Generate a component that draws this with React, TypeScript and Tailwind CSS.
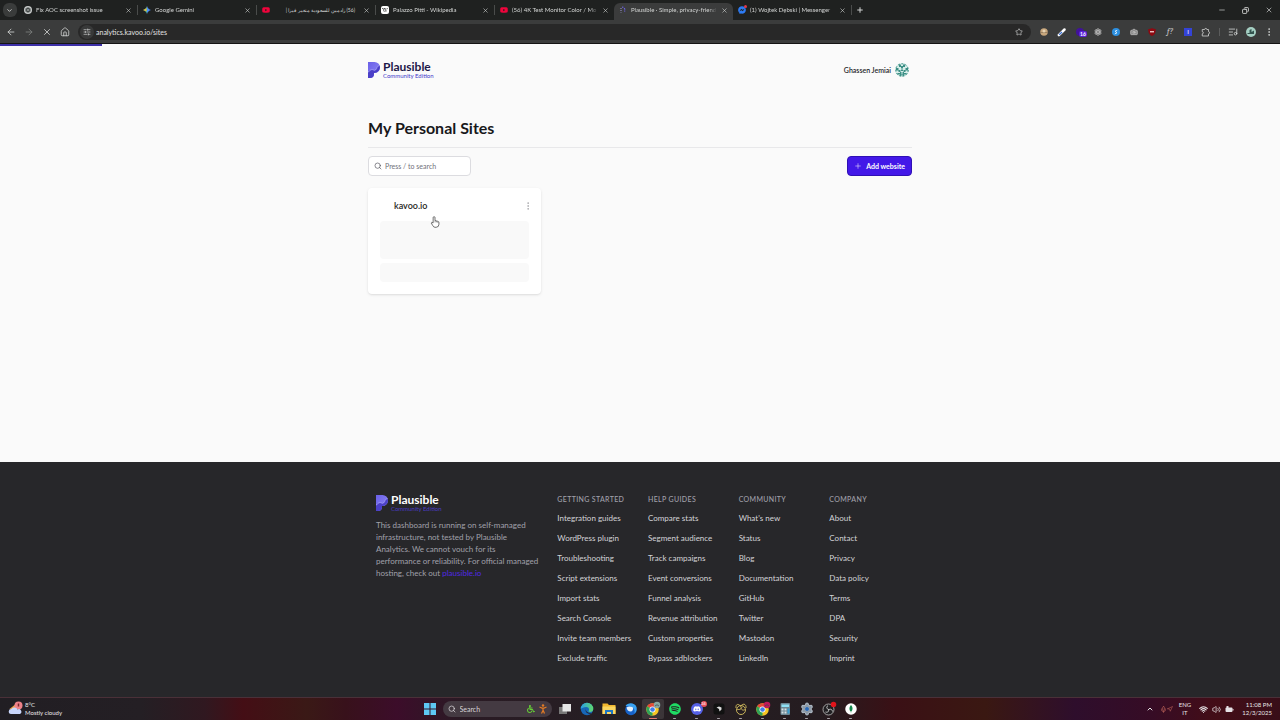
import type { ReactNode } from 'react'
import {
	ArrowLeft,
	ArrowRight,
	Camera,
	ChevronDown,
	ChevronUp,
	Copy,
	EllipsisVertical,
	House,
	ListMusic,
	Mic,
	Minus,
	Navigation,
	Plus,
	Search,
	Settings,
	SlidersHorizontal,
	Star,
	Volume2,
	Wifi,
	X,
} from 'lucide-react'
import {
	FaDiscord,
	FaFacebookMessenger,
	FaSpotify,
	FaWheelchair,
	FaWikipediaW,
	FaYoutube,
} from 'react-icons/fa'

interface Tab {
	title: string
	icon: ReactNode
	active?: boolean
	rtl?: boolean
}

function GptIcon() {
	return (
		<svg viewBox="0 0 16 16" className="size-2">
			<circle cx="8" cy="8" r="8" fill="#c9cccb" />
			<g fill="none" stroke="#2f3533" strokeWidth="1.2">
				<ellipse cx="8" cy="8" rx="2.4" ry="5.2" />
				<ellipse cx="8" cy="8" rx="2.4" ry="5.2" transform="rotate(60 8 8)" />
				<ellipse cx="8" cy="8" rx="2.4" ry="5.2" transform="rotate(120 8 8)" />
			</g>
		</svg>
	)
}

function GeminiIcon() {
	return (
		<svg viewBox="0 0 16 16" className="size-2">
			<path d="M8 0c0 5-1 7-3 8h6C9 7 8 5 8 0z" fill="#e8574a" />
			<path d="M8 0C7 4 4 7 0 8c4 1 7 4 8 8z" fill="#43b7a0" />
			<path d="M8 0c1 4 4 7 8 8-4 1-7 4-8 8z" fill="#4a8df6" />
			<path d="M0 8c4-1 6-3 7-5v8C5 10 3 9 0 8z" fill="#f2b93b" />
		</svg>
	)
}

function ChromeIcon({ badge }: { badge: string }) {
	return (
		<svg viewBox="0 0 32 32" className="size-4">
			<circle cx="15" cy="17" r="12.500" fill="#f6c624" />
			<path d="M15 17 4.200 10.700A12.500 12.500 0 0 1 25.800 10.700z" fill="#e5483b" />
			<path d="M15 17 4.200 10.700A12.500 12.500 0 0 0 15 29.500z" fill="#2fa457" />
			<circle cx="15" cy="17" r="6" fill="#fff" />
			<circle cx="15" cy="17" r="4.600" fill="#3f7de8" />
			<circle cx="24" cy="8" r="6.500" fill={badge} />
			<path d="M20 10q4-5 8 0" stroke="#3b4b50" strokeWidth="1.500" fill="none" />
		</svg>
	)
}

const youtube = <FaYoutube className="size-2 text-[#f0043c]" />

const tabs: Tab[] = [
	{ title: 'Fix AOC screenshot issue', icon: <GptIcon /> },
	{ title: 'Google Gemini', icon: <GeminiIcon /> },
	{ title: '(56) زادمين للسعودية متغير فيزا |', icon: youtube, rtl: true },
	{
		title: 'Palazzo Pitti - Wikipedia',
		icon: (
			<span className="flex size-2 items-center justify-center rounded-xs bg-white">
				<FaWikipediaW className="size-1.5 text-black" />
			</span>
		),
	},
	{ title: '(56) 4K Test Monitor Color / Mo', icon: youtube },
	{
		title: 'Plausible · Simple, privacy-friend',
		active: true,
		icon: (
			<svg viewBox="0 0 16 16" className="size-2">
				<path
					d="M6 2a6 6 0 0 1 5 9"
					fill="none"
					stroke="#6f63e8"
					strokeWidth="2.500"
					strokeDasharray="3 2"
				/>
				<path d="M4 4v9" stroke="#8b87b5" strokeWidth="2.500" strokeDasharray="2 2" />
			</svg>
		),
	},
	{
		title: '(1) Wojtek Dębski | Messenger',
		icon: (
			<span className="relative">
				<FaFacebookMessenger className="size-2 text-[#2d7bf4]" />
				<span className="absolute -top-px -right-px size-[3px] rounded-full bg-[#e2384a]" />
			</span>
		),
	},
]

const extensions: { label: string; icon: ReactNode }[] = [
	{
		label: 'Cookies',
		icon: (
			<svg viewBox="0 0 16 16" className="size-2">
				<circle cx="8" cy="8" r="7.500" fill="#c7a67c" />
				<path d="M1 9h14" stroke="#6c5a47" strokeWidth="1" />
				<circle cx="8" cy="6" r="3" fill="#e5d3b5" />
			</svg>
		),
	},
	{
		label: 'Color picker',
		icon: (
			<svg viewBox="0 0 16 16" className="size-2.5">
				<path d="M3 13 12 4" stroke="#fff" strokeWidth="4" strokeLinecap="round" />
				<path d="M3.500 12.500 8 8" stroke="#3b6fd1" strokeWidth="2" />
			</svg>
		),
	},
	{
		label: 'Trackers',
		icon: (
			<span className="relative flex size-2 rounded-full bg-[#41129a]">
				<span className="absolute top-[3px] left-[3px] rounded-xs bg-[#5b21d8] px-px text-[5px] leading-[6px] font-bold text-white">
					16
				</span>
			</span>
		),
	},
	{
		label: 'React tools',
		icon: (
			<svg viewBox="0 0 16 16" className="size-2">
				<g fill="none" stroke="#c4c4c4" strokeWidth="1.400">
					<ellipse cx="8" cy="8" rx="3" ry="7" />
					<ellipse cx="8" cy="8" rx="3" ry="7" transform="rotate(60 8 8)" />
					<ellipse cx="8" cy="8" rx="3" ry="7" transform="rotate(120 8 8)" />
				</g>
				<circle cx="8" cy="8" r="1.500" fill="#eee" />
			</svg>
		),
	},
	{
		label: 'Lookup',
		icon: (
			<svg viewBox="0 0 16 16" className="size-2">
				<circle cx="8" cy="8" r="8" fill="#2c8fe0" />
				<path d="M10.500 4.500 6 6.500l4 3-4.500 2.500" fill="none" stroke="#d9eeff" strokeWidth="2" />
			</svg>
		),
	},
	{ label: 'Screenshot', icon: <Camera className="size-2 fill-[#8d8d8d] text-[#c8c8c8]" /> },
	{
		label: 'Ad blocker',
		icon: (
			<svg viewBox="0 0 16 16" className="size-2">
				<path d="M8 0c2 1.500 5 2 7.500 2 0 7-1 11-7.500 14C1.500 13 .5 9 .5 2 3 2 6 1.500 8 0z" fill="#8d0911" />
				<path d="M4 7.500h8" stroke="#f2dcdc" strokeWidth="2.500" />
			</svg>
		),
	},
	{
		label: 'Font finder',
		icon: <span className="font-serif text-[8px] leading-none text-[#d6d6d6] italic">f?</span>,
	},
	{
		label: 'Inspector',
		icon: (
			<span className="flex size-2 items-center justify-center bg-[#3443d6] text-[6px] leading-none text-white">
				I
			</span>
		),
	},
	{
		label: 'Extensions',
		icon: (
			<svg viewBox="0 0 20 20" className="size-2.5" fill="none" stroke="currentColor" strokeWidth="1.600">
				<path d="M2.500 5h4.800a2.200 2.200 0 0 1 4.400 0H15v4.300a2.200 2.200 0 0 1 0 4.400V18H2.500v-4.300a2.200 2.200 0 0 0 0-4.400z" />
			</svg>
		),
	},
]

const footerColumns = [
	{
		title: 'Getting started',
		links: [
			'Integration guides',
			'WordPress plugin',
			'Troubleshooting',
			'Script extensions',
			'Import stats',
			'Search Console',
			'Invite team members',
			'Exclude traffic',
		],
	},
	{
		title: 'Help guides',
		links: [
			'Compare stats',
			'Segment audience',
			'Track campaigns',
			'Event conversions',
			'Funnel analysis',
			'Revenue attribution',
			'Custom properties',
			'Bypass adblockers',
		],
	},
	{
		title: 'Community',
		links: [
			"What's new",
			'Status',
			'Blog',
			'Documentation',
			'GitHub',
			'Twitter',
			'Mastodon',
			'LinkedIn',
		],
	},
	{
		title: 'Company',
		links: [
			'About',
			'Contact',
			'Privacy',
			'Data policy',
			'Terms',
			'DPA',
			'Security',
			'Imprint',
		],
	},
]

const taskbarApps: { label: string; icon: ReactNode; running?: boolean; active?: boolean }[] = [
	{
		label: 'Task view',
		icon: (
			<svg viewBox="0 0 32 32" className="size-4">
				<path d="M4 12h16v14H4z" fill="#777" />
				<path d="M11 6h17v15H11z" fill="#e6e6e6" />
			</svg>
		),
	},
	{
		label: 'Edge',
		icon: (
			<svg viewBox="0 0 32 32" className="size-4">
				<defs>
					<linearGradient id="edge" x1="0" x2="1">
						<stop offset="0" stopColor="#2a9de6" />
						<stop offset="1" stopColor="#5fd86a" />
					</linearGradient>
				</defs>
				<circle cx="16" cy="16" r="12.500" fill="#1767b8" />
				<path d="M3.500 16a12.500 12.500 0 0 1 25 0c0 5-5 7-10 5 3-3 2-9-4-9-5 0-9 2-11 4z" fill="url(#edge)" />
				<path d="M14 15c-1 6 3 9 10 9 2 0-2 2.500-4 1.500-6-1-8-5-6-10.500z" fill="#252126" />
			</svg>
		),
	},
	{
		label: 'File Explorer',
		icon: (
			<svg viewBox="0 0 32 32" className="size-4">
				<path d="M3 5h10l3 3h13v18H3z" fill="#f3b72f" />
				<path d="M3 11h26v15H3z" fill="#fbd661" />
				<path d="M8 26v-8h16v8h-4v-4h-8v4z" fill="#1c76c4" />
			</svg>
		),
	},
	{
		label: 'Thunderbird',
		icon: (
			<svg viewBox="0 0 32 32" className="size-4">
				<circle cx="16" cy="17" r="11.500" fill="#1762c9" />
				<path d="M5 10c4-7 18-8 22 2 1 7-1 10-4 13 2-10-3-16-18-15z" fill="#39a2f2" />
				<path d="M7 13c3-3 9-3 13 0 1 4-1 8-5 8s-7-3-8-8z" fill="#e5f1fc" />
			</svg>
		),
	},
	{ label: 'Chrome', icon: <ChromeIcon badge="#87a7a1" />, running: true, active: true },
	{
		label: 'Spotify',
		icon: <FaSpotify className="size-3 text-[#1fdb64]" />,
		running: true,
	},
	{
		label: 'Discord',
		running: true,
		icon: (
			<span className="relative flex size-3 items-center justify-center rounded-full bg-[#5560e6]">
				<FaDiscord className="size-2 text-white" />
				<span className="absolute -top-0.5 -right-1 size-1.5 rounded-full bg-[#e9505e] text-center text-[4px] leading-[6px] text-white">
					24
				</span>
			</span>
		),
	},
	{
		label: 'Cursor',
		running: true,
		icon: (
			<svg viewBox="0 0 32 32" className="size-4">
				<rect x="5" y="5" width="22" height="22" rx="5" fill="#111" />
				<path d="M11 13l5-2 5 2v4l-4 4-1-5z" fill="#ddd" />
			</svg>
		),
	},
	{
		label: 'Navicat',
		running: true,
		icon: (
			<svg viewBox="0 0 32 32" className="size-4" fill="none" stroke="#c9b45b" strokeWidth="2">
				<circle cx="16" cy="18" r="9" />
				<path d="M6 14c-1-9 6-9 9-3 4-7 12-6 11 3M8 16c5 3 10-1 10-5M24 17c-4 3-8 0-8-4" />
			</svg>
		),
	},
	{ label: 'Chrome, second profile', icon: <ChromeIcon badge="#c2185b" />, running: true },
	{
		label: 'Calculator',
		running: true,
		icon: (
			<svg viewBox="0 0 32 32" className="size-4">
				<rect x="7" y="4" width="19" height="24" rx="2" fill="#6e8894" />
				<path d="M9 7h15v5H9z" fill="#8fe1f5" />
				<path d="M9 15h4v4H9zM15 15h4v4h-4zM9 21h4v4H9zM15 21h4v4h-4z" fill="#d5e1e5" />
				<path d="M21 15h4v10h-4z" fill="#369fd2" />
			</svg>
		),
	},
	{
		label: 'Settings',
		running: true,
		icon: (
			<span className="relative flex">
				<Settings className="size-3.5 fill-[#8a97a4] text-[#a9b4bf]" />
				<span className="absolute inset-[5px] rounded-full bg-[#2767b5]" />
			</span>
		),
	},
	{
		label: 'OBS Studio',
		running: true,
		icon: (
			<svg viewBox="0 0 32 32" className="size-4">
				<circle cx="15" cy="17" r="11" fill="#211f22" stroke="#c9c9c9" strokeWidth="1.500" />
				<g fill="none" stroke="#c9c9c9" strokeWidth="2">
					<path d="M14 9c-5 4-1 8 2 8" />
					<path d="M9 22c6 2 7-3 6-6" />
					<path d="M23 21c-1-6-6-5-8-3" />
				</g>
				<circle cx="25" cy="7" r="5.500" fill="#e3141b" />
			</svg>
		),
	},
	{
		label: 'MongoDB Compass',
		running: true,
		icon: (
			<svg viewBox="0 0 32 32" className="size-4">
				<circle cx="16" cy="16" r="11.500" fill="#fff" />
				<path d="M16 8c5 5 3 11 .5 13L16 25l-.5-4C13 19 11 13 16 8z" fill="#12884c" />
			</svg>
		),
	},
]

function BrowserTabs() {
	return (
		<div className="flex h-5 items-center bg-[#1f2120] text-[#d3d5d4]">
			<div className="flex w-[19px] shrink-0 justify-center">
				<button
					type="button"
					aria-label="Search tabs"
					className="flex size-3.5 items-center justify-center rounded-md bg-[#3a3c3b]"
				>
					<ChevronDown className="size-[7px]" strokeWidth={3} />
				</button>
			</div>
			{tabs.map((tab, index) => (
				<div
					key={tab.title}
					className={`flex w-[119px] shrink-0 items-center self-stretch ${
						tab.active ? 'mt-[3px] rounded-t-md bg-[#3b3c3c] pb-[3px]' : ''
					}`}
				>
					<div
						className={`flex w-full items-center gap-1 pr-[5px] pl-[5px] ${
							index < 4 || index === 6 ? 'border-r border-[#4a4c4b]' : ''
						}`}
					>
						<span className="flex size-2 shrink-0 items-center justify-center">
							{tab.icon}
						</span>
						<span
							dir={tab.rtl ? 'rtl' : 'ltr'}
							className={`flex-1 overflow-hidden leading-[10px] whitespace-nowrap ${
								tab.rtl ? 'pr-1 text-[5px]' : 'mask-r-from-90% text-[6px]'
							}`}
						>
							{tab.title}
						</span>
						<button type="button" aria-label={`Close ${tab.title}`}>
							<X className="size-[7px]" strokeWidth={2} />
						</button>
					</div>
				</div>
			))}
			<button type="button" aria-label="New tab" className="ml-1">
				<Plus className="size-2" strokeWidth={3} />
			</button>
			<div className="ml-auto flex items-center gap-4 pr-[7px]">
				<button type="button" aria-label="Minimize">
					<Minus className="size-2" />
				</button>
				<button type="button" aria-label="Restore">
					<Copy className="size-[7px] -scale-x-100" strokeWidth={3} />
				</button>
				<button type="button" aria-label="Close">
					<X className="size-2" />
				</button>
			</div>
		</div>
	)
}

function BrowserToolbar() {
	return (
		<div className="flex h-6 items-center border-b border-[#141414] bg-[#3b3c3c] pr-0.5 pl-[6px] text-[#d0d2d1]">
			<div className="flex items-center gap-2">
				<button type="button" aria-label="Back">
					<ArrowLeft className="size-2.5" />
				</button>
				<button type="button" aria-label="Forward" className="text-[#7d7f7e]">
					<ArrowRight className="size-2.5" />
				</button>
				<button type="button" aria-label="Stop">
					<X className="size-2.5" />
				</button>
				<button type="button" aria-label="Home">
					<House className="size-2.5" />
				</button>
			</div>
			<div className="ml-2 flex h-4 flex-1 items-center rounded-full bg-[#282828] pr-2 pl-0.5">
				<button
					type="button"
					aria-label="Site information"
					className="flex size-3.5 items-center justify-center rounded-full bg-[#383939]"
				>
					<SlidersHorizontal className="size-2" />
				</button>
				<input
					aria-label="Address"
					defaultValue="analytics.kavoo.io/sites"
					className="ml-0.5 h-3 flex-1 bg-transparent text-[7px] text-[#e3e3e3] outline-none"
				/>
				<button type="button" aria-label="Bookmark">
					<Star className="size-2" />
				</button>
			</div>
			<div className="ml-1 flex items-center">
				{extensions.map((item) => (
					<button
						key={item.label}
						type="button"
						aria-label={item.label}
						className="flex w-[18px] items-center justify-center"
					>
						{item.icon}
					</button>
				))}
				<span className="mx-1 h-2 w-px bg-[#5b5c5c]" />
				<button type="button" aria-label="Media" className="flex w-[18px] justify-center">
					<ListMusic className="size-2.5" />
				</button>
				<button type="button" aria-label="Profile" className="flex w-[18px] justify-center">
					<svg viewBox="0 0 20 20" className="size-2.5">
						<circle cx="10" cy="10" r="10" fill="#a5cfc3" />
						<path d="M2 12h5V6l4-2v6l5-3v7H4z" fill="#32534e" />
					</svg>
				</button>
				<button type="button" aria-label="Menu" className="flex w-[18px] justify-center">
					<EllipsisVertical className="size-2.5" />
				</button>
			</div>
		</div>
	)
}

function Logo({ dark }: { dark?: boolean }) {
	const id = dark ? 'logo-dark' : 'logo-light'

	return (
		<a href="#home" className="flex h-[17px] items-center gap-[3px]">
			<svg viewBox="0 0 24 32" className="h-4 w-3">
				<defs>
					<linearGradient id={id} x1="0" y1="0" x2="1" y2="1">
						<stop offset="0" stopColor="#6a60e8" />
						<stop offset="1" stopColor="#8f88f5" />
					</linearGradient>
				</defs>
				<path
					d="M0 0h13a11 11 0 0 1 0 22h-1v2q0 8-8 8H0z"
					fill={`url(#${id})`}
				/>
				<path
					d="M0 20c3 0 4-5 8-5 3 0 4 3 7 1 4-3 2-8 8-9a11 11 0 0 1-10 15h-1v2q0 8-8 8H0z"
					fill="#4b40c8"
				/>
				<path
					d="M0 20c3 0 4-5 8-5 3 0 4 3 7 1 4-3 2-8 8-9"
					fill="none"
					stroke="#b7b2ff"
					strokeWidth="1.200"
				/>
			</svg>
			<span className="flex flex-col">
				<span
					className={`text-[12px] leading-3 font-bold ${dark ? 'text-white' : 'text-[#1d1748]'}`}
				>
					Plausible
				</span>
				<span
					className={`text-[6px] leading-[6px] ${dark ? 'text-[#4a3cc0]' : 'text-[#4338ca]'}`}
				>
					Community Edition
				</span>
			</span>
		</a>
	)
}

function SiteCard() {
	return (
		<li className="relative rounded-sm bg-white p-3 shadow-sm">
			<div className="flex h-3 items-center justify-between">
				<a
					href="#kavoo"
					className="pl-3.5 text-[9px] leading-3 font-semibold text-[#1f1f23]"
				>
					kavoo.io
				</a>
				<button type="button" aria-label="Site menu" className="-mr-1 text-[#71717a]">
					<EllipsisVertical className="size-2.5" strokeWidth={1} />
				</button>
			</div>
			<div className="mt-[9px] h-[38px] rounded-sm bg-[#f9f9f9]" />
			<div className="mt-1 h-[19px] rounded-sm bg-[#f9f9f9]" />
			<svg viewBox="0 0 20 26" className="absolute top-7 left-[62px] h-3 w-2.5">
				<path
					d="M6 14V3.500a2 2 0 0 1 4 0V10l6 1.500q2.500.5 2.500 3V18q0 6-6 6.500H10q-3 0-5-4L2 15.500q0-3 4-.5z"
					fill="#fff"
					stroke="#333"
					strokeWidth="1.500"
				/>
				<path d="M10 10v4M13 11v3M16 12v3" stroke="#555" />
			</svg>
		</li>
	)
}

function SitesPage() {
	return (
		<div className="relative flex flex-1 flex-col bg-[#fafafa]">
			<div className="absolute top-0 left-0 h-0.5 w-[8%] bg-[#3d30a8]" />
			<header className="mx-auto flex w-full max-w-[576px] items-center justify-between px-4 pt-[17px]">
				<Logo />
				<button
					type="button"
					className="flex items-center gap-1 pr-[3px] text-[7px] leading-[10px] font-semibold text-[#27272a]"
				>
					Ghassen Jemiai
					<svg viewBox="0 0 28 28" className="size-3.5">
						<circle cx="14" cy="14" r="14" fill="#d9eeea" />
						<path
							d="M8 3h4v3h4V3h4v5h-4v3h-4V8H8zM2 10h5v4h4v4H7v-3H2zM26 10h-5v4h-4v4h4v-3h5zM12 13h4v3h-4zM5 20h5v-2h3v4h2v-4h3v2h5v3h-5v3h-3v-3h-2v3h-3v-3H5z"
							fill="#3c8f85"
						/>
						<circle cx="14" cy="14" r="12.500" fill="none" stroke="#3c8f85" strokeDasharray="4 3" strokeWidth="2" />
					</svg>
				</button>
			</header>

			<main className="mx-auto w-full max-w-[576px] flex-1 px-4 pt-10">
				<div className="border-b border-[#e8e8ea] pb-[9px]">
					<h1 className="text-[16px] leading-5 font-bold text-[#18181b]">My Personal Sites</h1>
				</div>
				<div className="mt-2 flex items-center justify-between">
					<label className="flex h-5 w-[103px] items-center gap-[3px] rounded-sm border border-[#dcdce0] bg-white px-[5px] text-[#52525b]">
						<Search className="size-2" />
						<input
							type="text"
							aria-label="Search sites"
							placeholder="Press / to search"
							className="min-w-0 flex-1 text-[7px] leading-[10px] outline-none placeholder:text-[#71717a]"
						/>
					</label>
					<button
						type="button"
						className="flex h-5 items-center gap-1 rounded-sm border border-[#2f10b5] bg-[#4318e8] px-1.5 text-[7px] leading-[10px] font-bold whitespace-nowrap text-white"
					>
						<Plus className="size-2" strokeWidth={1.5} />
						Add website
					</button>
				</div>
				<ul className="mt-3 grid grid-cols-3 gap-3">
					<SiteCard />
				</ul>
			</main>

			<footer className="bg-[#27272a]">
				<div className="mx-auto grid w-full max-w-[576px] grid-cols-3 gap-4 px-6 pt-8 pb-[33px]">
					<div>
						<Logo dark />
						<p className="mt-2 text-[8px] leading-3 text-[#a1a1aa]">
							This dashboard is running on self-managed infrastructure, not tested by
							Plausible Analytics. We cannot vouch for its performance or reliability. For
							official managed hosting, check out{' '}
							<a href="#plausible" className="text-[#5028e6]">
								plausible.io
							</a>
						</p>
					</div>
					<div className="col-span-2 grid grid-cols-4 gap-4">
						{footerColumns.map((column) => (
							<div key={column.title}>
								<h4 className="text-[7px] leading-[10px] font-medium tracking-wider whitespace-nowrap text-[#a1a1aa] uppercase">
									{column.title}
								</h4>
								<ul className="mt-2 space-y-2">
									{column.links.map((link) => (
										<li key={link} className="text-[8px] leading-3">
											<a href="#docs" className="whitespace-nowrap text-[#d4d4d8]">
												{link}
											</a>
										</li>
									))}
								</ul>
							</div>
						))}
					</div>
				</div>
			</footer>
		</div>
	)
}

function Taskbar() {
	return (
		<div className="flex h-[23px] items-center border-t border-[#4a3038] bg-linear-[90deg,#211e23_0%,#241f24_11%,#301820_16%,#440e15_19%,#3a1916_24%,#38111b_27%,#3c0d2a_31%,#2a1a24_36%,#251f23_48%,#251c20_64%,#3a1015_70%,#3a1812_77%,#2e0e2c_84%,#360c25_90%,#430d17_95%,#380e18_100%] text-[#e8e6e8]">
			<div className="flex flex-1 items-center gap-px pl-2">
				<svg viewBox="0 0 32 32" className="size-4">
					<path d="M3 16 18 4v12z" fill="#eda04b" />
					<circle cx="21" cy="9" r="8" fill="#ee8289" />
					<path d="M21 5v6" stroke="#7b252d" strokeWidth="3" />
					<path d="M6 26a5 5 0 0 1 1-10 7 7 0 0 1 12 1 5 5 0 0 1 5 9z" fill="#c9d6fb" />
				</svg>
				<div className="text-[6px] leading-2">
					<p>8°C</p>
					<p>Mostly cloudy</p>
				</div>
			</div>
			<div className="flex h-full items-center">
				<button type="button" aria-label="Start" className="flex w-[22px] justify-center">
					<svg viewBox="0 0 24 24" className="size-3">
						<path d="M0 0h11v11H0zM13 0h11v11H13zM0 13h11v11H0zM13 13h11v11H13z" fill="#5ec8f5" />
					</svg>
				</button>
				<label className="mx-0.5 flex h-4 w-[109px] items-center gap-1 rounded-full bg-[#443a42] px-[5px]">
					<Search className="size-2" />
					<input
						type="text"
						aria-label="Search Windows"
						placeholder="Search"
						className="min-w-0 flex-1 text-[7px] outline-none placeholder:text-[#d6d2d6]"
					/>
					<FaWheelchair className="size-2 text-[#66cf36]" />
					<svg viewBox="0 0 16 20" className="h-2.5 w-2">
						<circle cx="8" cy="3" r="2.500" fill="#e07a26" />
						<path
							d="M1 6l5 2h4l5-2M8 8v5l-3 6M8 12l3 7"
							stroke="#e07a26"
							strokeWidth="2.500"
							fill="none"
						/>
					</svg>
				</label>
				{taskbarApps.map((app) => (
					<button
						key={app.label}
						type="button"
						aria-label={app.label}
						className={`relative flex h-5 w-[22px] items-center justify-center rounded-xs ${
							app.active ? 'bg-white/10' : ''
						}`}
					>
						{app.icon}
						{app.running && (
							<span
								className={`absolute bottom-0 h-px rounded-full ${
									app.active ? 'w-2 bg-[#e77b72]' : 'w-[3px] bg-[#a5a0a5]'
								}`}
							/>
						)}
					</button>
				))}
			</div>
			<div className="flex flex-1 items-center justify-end pr-2 text-[6px] leading-2">
				<ChevronUp className="mr-1.5 size-2" strokeWidth={3} />
				<Mic className="size-[7px] text-[#c96a5f]" />
				<Navigation className="size-1.5 text-[#c96a5f]" />
				<div className="ml-1.5 text-center">
					<p>ENG</p>
					<p>IT</p>
				</div>
				<div className="ml-2 flex items-center gap-1">
					<Wifi className="size-[9px]" strokeWidth={3} />
					<Volume2 className="size-[9px]" />
					<svg viewBox="0 0 18 14" className="h-2 w-[9px]">
						<rect x="1" y="4" width="14" height="9" rx="2" fill="#e6e2e6" />
						<path d="M16 7v3" stroke="#e6e2e6" strokeWidth="2" />
						<path d="M5 1v4M2 3h6" stroke="#e6e2e6" strokeWidth="2" />
					</svg>
				</div>
				<div className="ml-2 text-right">
					<p>11:08 PM</p>
					<p>12/3/2025</p>
				</div>
			</div>
		</div>
	)
}

export default function App() {
	return (
		<div className="flex min-h-screen flex-col font-['Lato','Noto_Sans',sans-serif]">
			<BrowserTabs />
			<BrowserToolbar />
			<SitesPage />
			<Taskbar />
		</div>
	)
}
